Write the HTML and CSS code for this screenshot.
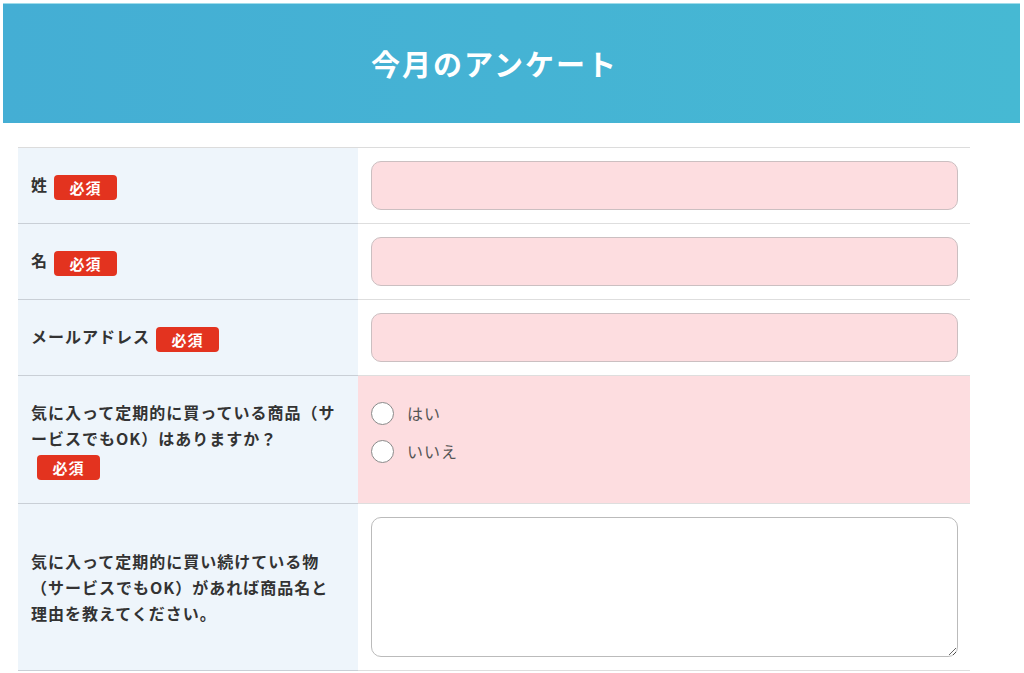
FILE: index.html
```html
<!DOCTYPE html>
<html lang="ja">
<head>
<meta charset="utf-8">
<title>今月のアンケート</title>
<link rel="stylesheet" href="styles.css">
</head>
<body>
<header class="hero">
  <h1 class="hero-title">今月のアンケート</h1>
</header>
<form class="survey">
  <div class="label"><p>姓<span class="req">必須</span></p></div>
  <div class="field"><input class="text-input" type="text"></div>

  <div class="label"><p>名<span class="req">必須</span></p></div>
  <div class="field"><input class="text-input" type="text"></div>

  <div class="label"><p>メールアドレス<span class="req">必須</span></p></div>
  <div class="field"><input class="text-input" type="email"></div>

  <div class="label"><p>気に入って定期的に買っている商品（サービスでもOK）はありますか？<br><span class="req">必須</span></p></div>
  <div class="field field-radio">
    <label class="radio"><span class="dot"></span>はい</label>
    <label class="radio"><span class="dot"></span>いいえ</label>
  </div>

  <div class="label"><p>気に入って定期的に買い続けている物（サービスでもOK）があれば商品名と理由を教えてください。</p></div>
  <div class="field"><textarea class="text-area"></textarea></div>
</form>
</body>
</html>
```
FILE: styles.css
```css
* { box-sizing: border-box; }
html, body { margin: 0; padding: 0; background: #fff; }
body {
  font-family: "Noto Sans CJK JP", "Noto Sans", sans-serif;
  color: #333;
}
.hero {
  margin: 3px 4px 0 3px;
  height: 120px;
  background: linear-gradient(90deg, #44aed4 0%, #45b3d4 50%, #46b9d3 100%);
  border-top: 1px solid #9fdcea;
  display: flex;
  align-items: center;
  justify-content: center;
  padding-right: 34px;
}
.hero-title {
  margin: 0;
  color: #fff;
  font-size: 29px;
  font-weight: 700;
  letter-spacing: 2px;
  line-height: 1;
}
.survey {
  margin: 24px 0 0 18px;
  width: 952px;
  display: grid;
  grid-template-columns: 340px 612px;
  border-top: 1px solid #dcdcdc;
}
.label {
  background: #eef5fb;
  border-bottom: 1px solid #c9cfd6;
  padding: 0 15px 0 13px;
  display: flex;
  align-items: center;
}
.label p {
  margin: 0;
  font-size: 16px;
  font-weight: 700;
  letter-spacing: 1px;
  line-height: 26px;
}
.req {
  display: inline-block;
  width: 63px;
  height: 25px;
  line-height: 25px;
  margin-left: 6px;
  background: #e3331f;
  color: #fff;
  border-radius: 4px;
  text-align: center;
  font-size: 15px;
  font-weight: 700;
  letter-spacing: 1px;
  vertical-align: middle;
}
.field {
  border-bottom: 1px solid #dedede;
  padding: 13px 12px 13px 13px;
}
.text-input {
  display: block;
  width: 587px;
  height: 49px;
  margin: 0;
  background: #fddde0;
  border: 1px solid #cbbfc1;
  border-radius: 10px;
  outline: none;
}
.field-radio {
  background: #fddde0;
  padding: 18px 13px 33px 13px;
}
.radio {
  display: flex;
  align-items: center;
  height: 38px;
  font-size: 16px;
  color: #555;
  letter-spacing: 1px;
}
.dot {
  width: 23px;
  height: 23px;
  border: 1.5px solid #8a8a8a;
  border-radius: 50%;
  background: #fff;
  margin-right: 13px;
}
.text-area {
  display: block;
  width: 587px;
  height: 140px;
  margin: 0;
  background: #fff;
  border: 1px solid #bbb;
  border-radius: 10px;
  outline: none;
}
```
